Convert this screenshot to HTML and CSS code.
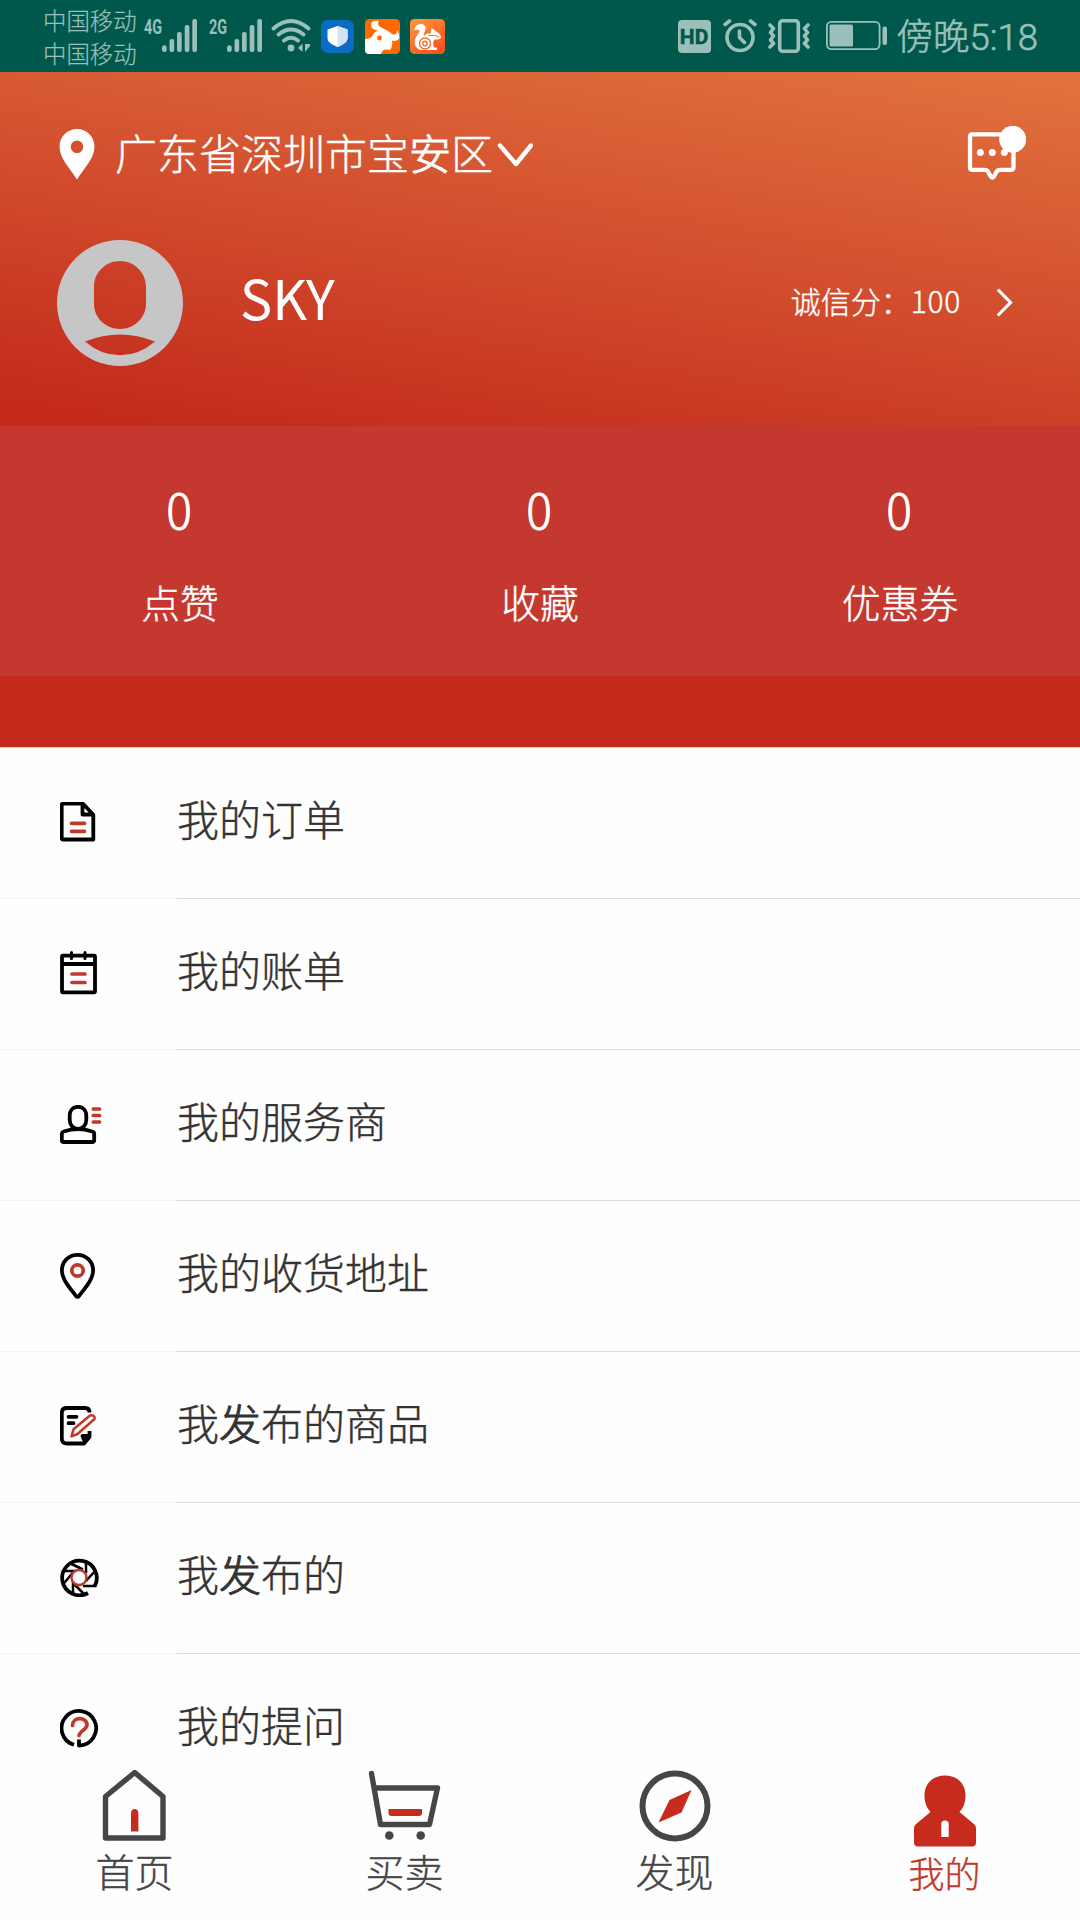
FILE: index.html
```html
<!DOCTYPE html>
<html lang="zh-CN">
<head>
<meta charset="utf-8">
<title>我的</title>
<link rel="stylesheet" href="styles.css">
</head>
<body>
<div class="app">
  <div class="status">
    <div class="carriers"><span>中国移动</span><span>中国移动</span></div>
    <svg class="signal" width="54" height="50" viewBox="144 11 54 50">
      <text x="144" y="34" font-size="20" textLength="18" lengthAdjust="spacingAndGlyphs">4G</text>
      <rect x="162" y="45.300" width="4.700" height="6.700" rx="2.200"/><rect x="169.500" y="39" width="4.700" height="13" rx="2"/><rect x="177" y="32" width="4.700" height="20" rx="2"/><rect x="184.700" y="25" width="4.700" height="27" rx="2"/><rect x="192.300" y="19" width="4.700" height="33" rx="2"/>
    </svg>
    <svg class="signal second" width="54" height="50" viewBox="144 11 54 50">
      <text x="144" y="34" font-size="20" textLength="18" lengthAdjust="spacingAndGlyphs">2G</text>
      <rect x="162" y="45.300" width="4.700" height="6.700" rx="2.200"/><rect x="169.500" y="39" width="4.700" height="13" rx="2"/><rect x="177" y="32" width="4.700" height="20" rx="2"/><rect x="184.700" y="25" width="4.700" height="27" rx="2"/><rect x="192.300" y="19" width="4.700" height="33" rx="2"/>
    </svg>
    <svg class="wifi" width="40" height="36" viewBox="271 18 40 36">
      <g fill="none" stroke="currentColor" stroke-width="3.800" stroke-linecap="round"><path d="M273.500 28.500Q291 13.500 308.500 28.500M278.500 34.500Q291 24.500 303.500 34.500M284 40.500Q291 35 298 40.500"/></g>
      <circle cx="291" cy="48" r="3.400"/><path d="M298 48l4.500-4.500V52zM305 44v8l5-6v-2z"/>
    </svg>
    <svg class="shield" width="33" height="33" viewBox="0 0 33 33">
      <rect width="33" height="33" rx="6.500" fill="#0a6cc4"/>
      <path d="M16.500 6l10 3.500v9q0 4.500-10 8.500Q6.500 23 6.500 18.500v-9z" fill="#fff"/><path d="M16.500 6l10 3.500v9q0 4.500-10 8.500z" fill="#d3e3f3"/>
    </svg>
    <svg class="bull" width="35" height="35" viewBox="0 0 35 35">
      <rect width="35" height="35" rx="4.500" fill="#ff6a00"/>
      <path d="M0 20Q6 20 8 16Q9 13 13 11.500Q6 10.500 6 6Q6 1 14 2Q11 6 17 9Q24 12 27 15Q32 17 32 11Q35 16 34 20Q31 23 27 21.500Q28 27 25 31Q17 29 16 35H4Q0 35 0 31z" fill="#fff"/>
      <circle cx="14.500" cy="19" r="2.400" fill="#ff6a00"/>
    </svg>
    <svg class="squirrel" width="35" height="35" viewBox="0 0 35 35">
      <defs><linearGradient id="uc" x1="0" y1="0" x2=".6" y2="1"><stop offset="0" stop-color="#ff9838"/><stop offset="1" stop-color="#f95420"/></linearGradient></defs>
      <rect width="35" height="35" rx="4.500" fill="url(#uc)"/>
      <path d="M4 11Q6 4 12 5Q18 7 14.500 13Q13 16 14 17Q17 13 20.500 15L21.500 9L27 13Q31 15 31 19Q29 21 25 20.500Q22 22 24 28.500H27V31H10Q3 28 5 20Q7 16 10 12Q8 10 4 11z" fill="#fff"/>
      <circle cx="15" cy="24.500" r="5.500" fill="none" stroke="#fa6c27" stroke-width="1.400"/><circle cx="15" cy="24.500" r="2.200" fill="none" stroke="#fa6c27" stroke-width="1.400"/><path d="M19 16.500Q25 15.500 29 18" fill="none" stroke="#fa6c27"/>
    </svg>
    <div class="status-right">
      <span class="hd">HD</span>
      <svg class="alarm" width="34" height="34" viewBox="0 0 34 34" fill="none" stroke="currentColor" stroke-width="3.600" stroke-linecap="round"><circle cx="17" cy="18.500" r="13"/><path d="M16.500 12v6.500l5 5M2 5.500L6.500 2M32 5.500L27.500 2"/></svg>
      <svg class="vibrate" width="42" height="34" viewBox="0 0 42 34" fill="none" stroke="currentColor" stroke-width="3.600" stroke-linecap="round" stroke-linejoin="round"><rect x="11.700" y="1.700" width="18.600" height="30.600" rx="3"/><path d="M2 6l3.500 3.500L2.500 13.500L5.500 17L2.500 21L5.500 24.500L2 28M40 6l-3.500 3.500L39.500 13.500L36.500 17L39.500 21L36.500 24.500L40 28"/></svg>
      <svg class="battery" width="62" height="30" viewBox="0 0 62 30"><rect x=".9" y=".9" width="52.700" height="27.200" rx="4.500" fill="none" stroke="currentColor" stroke-width="1.800"/><rect x="3.500" y="3.500" width="23.500" height="22" rx="1.500"/><rect x="56.500" y="5.500" width="4.500" height="18.500" rx="2"/></svg>
      <span class="clock">傍晚5:18</span>
    </div>
  </div>

  <header class="head">
    <div class="location">
      <svg class="pin" width="36" height="51" viewBox="0 0 36 51"><path fill="#fff" fill-rule="evenodd" d="M18 0C8 0 .5 8 .5 17.500C.5 29 10 38 18 50.500C26 38 35.500 29 35.500 17.500C35.500 8 28 0 18 0zM18 11.500a6.300 6.300 0 1 1 0 12.600a6.300 6.300 0 1 1 0-12.600z"/></svg>
      <span class="place">广东省深圳市宝<b>安</b>区</span>
      <svg class="down" width="36" height="24" viewBox="0 0 36 24"><path d="M3 2.500L19 21L34 2.500" fill="none" stroke="#fff" stroke-width="4.400" stroke-linecap="round" stroke-linejoin="round"/></svg>
      <svg class="message" width="60" height="56" viewBox="966 126 60 56">
        <path d="M972 134.300h39q2.500 0 2.500 2.500v30.500q0 2.500-2.500 2.500h-11q-2.500 0-3.500 2l-2.500 4.500q-1.700 2.500-3.400 0l-2.500-4.500q-1-2-3.500-2H972q-2 0-2-2.500v-30.500q0-2.500 2-2.500z" fill="none" stroke="#fff" stroke-width="4.300" stroke-linejoin="round"/>
        <g fill="#fff"><circle cx="980.300" cy="152.500" r="3.500"/><circle cx="992.300" cy="152.500" r="3.500"/><circle cx="1004.300" cy="152.500" r="3.500"/><circle cx="1012.700" cy="139.300" r="13.500"/></g>
      </svg>
    </div>
    <div class="profile">
      <svg width="126" height="126" viewBox="57 240 126 126"><path fill="#c6c6c6" fill-rule="evenodd" d="M120 240a63 63 0 1 1 0 126a63 63 0 1 1 0-126zM120 261c-14 0-26 11-26 26v17c0 14 12 25 26 25s26-11 26-25v-17c0-15-12-26-26-26zM85 341.500Q101 355.300 120 355.300T155 341.500Q120 327.500 85 341.500z"/></svg>
      <span class="name">SKY</span>
      <span class="score">诚信分：<span class="points">100</span></span>
      <svg class="next" width="18" height="30" viewBox="0 0 18 30"><path d="M1.800 1.500L14.500 14.500L1.800 27.500" fill="none" stroke="#fff" stroke-width="3.200"/></svg>
    </div>
  </header>

  <section class="stats">
    <div class="stat"><span class="num">0</span><span class="label">点赞</span></div>
    <div class="stat"><span class="num">0</span><span class="label">收藏</span></div>
    <div class="stat"><span class="num">0</span><span class="label">优惠券</span></div>
  </section>
  <div class="strip"></div>

  <main class="list">
    <div class="row"><div class="ico"><svg width="36" height="40" viewBox="60 803 36 40"><path class="k" d="M63 804.700h20l10.300 11v24.800H63q-1.300 0-1.300-1.500v-32.800q0-1.500 1.300-1.500zM82.500 805v10.500h11"/><path class="r" d="M71.500 824.300h13M71.500 832.300h13"/></svg></div><div class="txt">我的订单</div></div>
    <div class="row"><div class="ico"><svg width="38" height="44" viewBox="60 952 38 44"><path class="k" d="M63 956.700h31q1 0 1 1v34.600q0 1-1 1H63q-1 0-1-1v-34.600q0-1 1-1zM61.500 965h34"/><path class="k ring" d="M71.500 953.500v6M85 953.500v6"/><path class="r" d="M72 975h13M72 983.500h13"/></svg></div><div class="txt">我的账单</div></div>
    <div class="row"><div class="ico"><svg width="42" height="39" viewBox="60 1105 42 39"><path class="k" d="M78 1106.800c-5.500 0-8.300 4-8.300 9v4c0 5 3.500 9.200 8.300 9.200s8.300-4.200 8.300-9.200v-4c0-5-2.800-9-8.300-9zM61.800 1140v-6q0-2 2-2.500Q71 1129 78 1129t14.200 2.500q2 .5 2 2.500v6q0 2-2 2h-28.400q-2 0-2-2z"/><path class="r" d="M93.300 1109h6.200M93.300 1115.500h6.200M93.300 1122h6.200"/></svg></div><div class="txt">我的服务商</div></div>
    <div class="row"><div class="ico"><svg width="36" height="47" viewBox="60 1252 36 47"><path class="k" d="M77.500 1254.800c-9 0-15.600 7-15.600 15.500c0 9 7.800 17.500 14.100 25.700q1.500 1.800 3 0c6.300-8.200 14.100-16.700 14.100-25.700c0-8.500-6.600-15.500-15.600-15.500z"/><circle class="r" cx="77.500" cy="1270.500" r="5.700"/></svg></div><div class="txt">我的收货地址</div></div>
    <div class="row"><div class="ico"><svg width="37" height="40" viewBox="60 1406.500 37 40"><path class="k" d="M89.500 1413q0-4.500-4.500-4.500H66.800q-5 0-5 5v25.500q0 5 5 5H84l5.500-6.500v-6M82.500 1436.500h6.500l-4 6z"/><path class="k" d="M68.500 1417.300h8M68.500 1423.700h5" stroke-linecap="round"/><path class="r thin" d="M71.500 1436.800l2-7L90 1416q3-1 4.500 1.500v2L77.500 1434.500z"/></svg></div><div class="txt">我<b>发</b>布的商品</div></div>
    <div class="row"><div class="ico"><svg width="39" height="40" viewBox="60 1557.500 39 40"><path class="k" d="M94.500 1587A17.300 17.300 0 1 0 88 1593.500"/><path class="k thin" d="M70.500 1564l12.500 6M86 1561.500v12M96 1570.500L85.500 1582M96 1586.500H83M83.500 1594L72.500 1583M73 1593.500V1580M62.500 1585.500L73 1573M64 1571.500h13"/><circle class="r thin" cx="79" cy="1578" r="7.500"/></svg></div><div class="txt">我<b>发</b>布的</div></div>
    <div class="row"><div class="ico"><svg width="39" height="40" viewBox="60 1708.500 39 40"><path class="k" d="M74 1745.300A17.300 17.300 0 1 1 79 1746V1740"/><path class="r" d="M72.500 1726c0-9 14.500-9 14.500-.5c0 4-7.500 6.500-8 10.500"/></svg></div><div class="txt">我的提问</div></div>
  </main>

  <nav class="tabs">
    <div class="tab"><svg width="72" height="72" viewBox="99 1770 72 72"><path d="M105.500 1796.500L134.700 1772.500L163 1796.500V1838H105.500z" fill="none" stroke="#464646" stroke-width="5.400" stroke-linejoin="round"/><path d="M131 1831.500v-18q0-4.500 3.700-4.500t3.700 4.500v18z" fill="#c62b1e"/></svg><span>首页</span></div>
    <div class="tab"><svg width="74" height="72" viewBox="368 1770 74 72"><g fill="none" stroke="#464646" stroke-width="5.400" stroke-linecap="round" stroke-linejoin="round"><path d="M371.500 1773.500L380.500 1824.500H429.500L437.500 1788H375.500"/></g><circle cx="389.300" cy="1835.500" r="4.300" fill="#464646"/><circle cx="420.700" cy="1835.500" r="4.300" fill="#464646"/><path d="M388.500 1809h33.500v4q0 3-3 3h-27.500q-3 0-3-3z" fill="#c62b1e"/></svg><span>买卖</span></div>
    <div class="tab"><svg width="72" height="72" viewBox="638.500 1769.500 72 72"><circle cx="674.500" cy="1805.500" r="32.500" fill="none" stroke="#464646" stroke-width="6"/><path d="M691 1789.500L669 1799.500L658 1822L681 1812z" fill="#c62b1e"/></svg><span>发现</span></div>
    <div class="tab active"><svg width="64" height="72" viewBox="913 1775.500 64 72"><path fill="#c62b1e" fill-rule="evenodd" d="M945 1776c-12 0-20.500 8-20.500 20c0 7 2 12 6 16.500L915.500 1825q-1.500 1.500-1.500 4v14q0 4 4 4h54q4 0 4-4v-14q0-2.500-1.500-4L959.500 1812.500c4-4.500 6-9.500 6-16.500c0-12-8.500-20-20.500-20zM941.300 1837.500v-13q0-3.500 3.700-3.500t3.700 3.500v13z"/></svg><span>我的</span></div>
  </nav>
</div>
</body>
</html>
```
FILE: styles.css
```css
* { box-sizing: border-box; }
body { margin: 0; font-family: "Noto Sans CJK SC", sans-serif; font-weight: 300; background: #fefefe; -webkit-text-stroke: .4px currentColor; }
b { font-weight: 300; -webkit-text-stroke: 1px currentColor; }
svg { display: block; flex: none; }
.app { width: 1080px; height: 1920px; display: flex; flex-direction: column; overflow: hidden; }

.status { height: 72px; flex: none; background: #00574b; color: #9ac0ba; display: flex; align-items: center; padding-left: 43px; -webkit-text-stroke: 0; }
.status svg { fill: currentColor; }
.status .alarm, .status .vibrate { fill: none; }
.carriers { display: flex; flex-direction: column; width: 101px; font-size: 23.400px; line-height: 33px; padding-top: 1px; white-space: nowrap; -webkit-text-stroke: .2px currentColor; }
.signal text { font-family: Roboto, sans-serif; font-weight: 700; }
.signal.second { margin-left: 11px; }
.wifi { margin-left: 8px; }
.shield { margin-left: 10px; }
.bull { margin-left: 11px; }
.squirrel { margin-left: 10px; }
.status-right { display: flex; align-items: center; margin-left: auto; padding-right: 42px; }
.hd { width: 33px; height: 33px; border-radius: 4px; background: #9ac0ba; color: #00574b; font: 700 21px/34px Roboto, sans-serif; text-align: center; -webkit-text-stroke: .5px currentColor; }
.alarm { margin-left: 12px; }
.vibrate { margin-left: 11px; }
.battery { margin-left: 16px; }
.clock { margin-left: 9px; font: 300 36.500px/50px Roboto, "Noto Sans CJK SC", sans-serif; white-space: nowrap; padding-top: 3px; -webkit-text-stroke: .6px currentColor; }

.head { height: 354px; flex: none; padding: 52px 54px 0 57px; color: #fff; background: linear-gradient(9deg, #c32a1c 5%, #e2733f 100%); }
.location { display: flex; align-items: center; height: 60px; padding-left: 2px; }
.pin { margin-top: 1px; }
.place { margin-left: 20px; margin-top: -4px; font-size: 42px; line-height: 60px; }
.down { margin-left: 4px; margin-top: 2px; }
.message { margin-left: auto; }
.profile { display: flex; align-items: center; margin-top: 56px; height: 126px; padding-right: 12px; }
.name { margin-left: 57px; font-size: 54px; font-weight: 400; line-height: 80px; margin-top: -12px; -webkit-text-stroke: 0; }
.score { margin-left: auto; font-size: 30px; margin-top: -6px; }
.points { letter-spacing: .7px; }
.next { margin-left: 35px; }

.stats { height: 250px; flex: none; display: grid; grid-template-columns: repeat(3, 1fr); background: #c4382f; color: #fff; }
.stat { display: flex; flex-direction: column; align-items: center; padding-top: 46px; }
.num { font-size: 48px; line-height: 72px; margin-right: 2px; -webkit-text-stroke: .8px currentColor; }
.label { font-size: 38.800px; line-height: 56px; margin-top: 28.500px; }
.strip { height: 72px; flex: none; background: #c32a1c; border-bottom: 1px solid #f0c4bf; }

.list { flex: 1; min-height: 0; overflow: hidden; background: #fefefe; }
.row { display: flex; height: 151px; color: #333; }
.ico { width: 177px; padding: 0 0 2px 60px; display: flex; align-items: center; border-bottom: 1px solid #f4f4f4; }
.txt { flex: 1; font-size: 42px; line-height: 140px; border-bottom: 1px solid #dcdcdc; }
.k { fill: none; stroke: #000; stroke-width: 3.800; stroke-linejoin: round; }
.k.ring { stroke-width: 3; stroke-linecap: round; }
.r { fill: none; stroke: #c0392b; stroke-width: 3.700; stroke-linecap: round; }
.k.thin, .r.thin { stroke-width: 2.500; }
.r.thin { fill: #fff; stroke-linejoin: round; }

.tabs { height: 156px; flex: none; display: grid; grid-template-columns: repeat(4, 1fr); background: #fefefe; color: #464646; }
.tab { display: flex; flex-direction: column; align-items: center; padding-top: 6px; font-size: 39px; line-height: 56px; }
.tab span { margin-right: 1px; }
.tab.active { color: #c0392b; font-size: 36px; padding-top: 11px; }
.tab.active span { margin-top: -3px; }
```
